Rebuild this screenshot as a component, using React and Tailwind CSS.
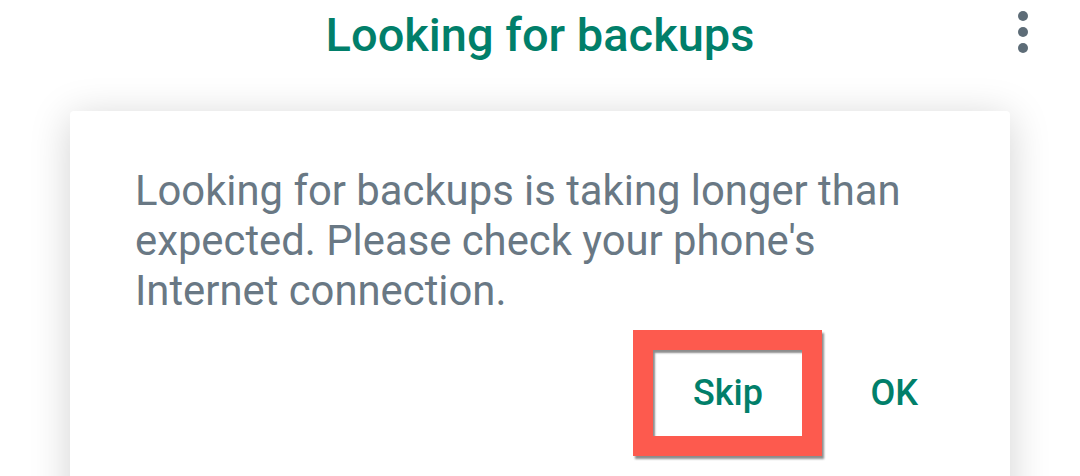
export default function App() {
  return (
    <div className="w-[1080px] h-[476px] overflow-hidden bg-white relative" style={{ fontFamily: 'Roboto, "Liberation Sans", sans-serif' }}>
      {/* Toolbar */}
      <div className="h-[80px] flex items-center justify-center relative">
        <h1 className="text-[47px] font-medium text-[#017f6a] leading-none -mt-[12px]">Looking for backups</h1>
        <div className="absolute right-[52px] top-[11px] flex flex-col gap-[6px]">
          <span className="w-[10px] h-[10px] rounded-full bg-[#5d6c77]" />
          <span className="w-[10px] h-[10px] rounded-full bg-[#5d6c77]" />
          <span className="w-[10px] h-[10px] rounded-full bg-[#5d6c77]" />
        </div>
      </div>

      {/* Dialog */}
      <div className="mx-[70px] mt-[31px] bg-white rounded-[4px] shadow-[0_6px_40px_rgba(0,0,0,0.18)] h-[420px] pt-[55px] px-[65px]">
        <p className="text-[41.8px] leading-[50px] text-[#697884]">
          Looking for backups is taking longer than expected. Please check your phone's Internet connection.
        </p>
        <div className="flex justify-end items-center mt-[14px] pr-[27px]">
          <div className="border-[20px] border-[#fd5a4e] w-[189px] h-[126px] flex items-center justify-center shadow-[2px_3px_2px_rgba(0,0,0,0.45),inset_2px_3px_2px_rgba(0,0,0,0.45)]">
            <span className="text-[36px] font-medium text-[#017f6a]">Skip</span>
          </div>
          <span className="text-[36px] font-medium text-[#017f6a] ml-[48px]">OK</span>
        </div>
      </div>
    </div>
  );
}
